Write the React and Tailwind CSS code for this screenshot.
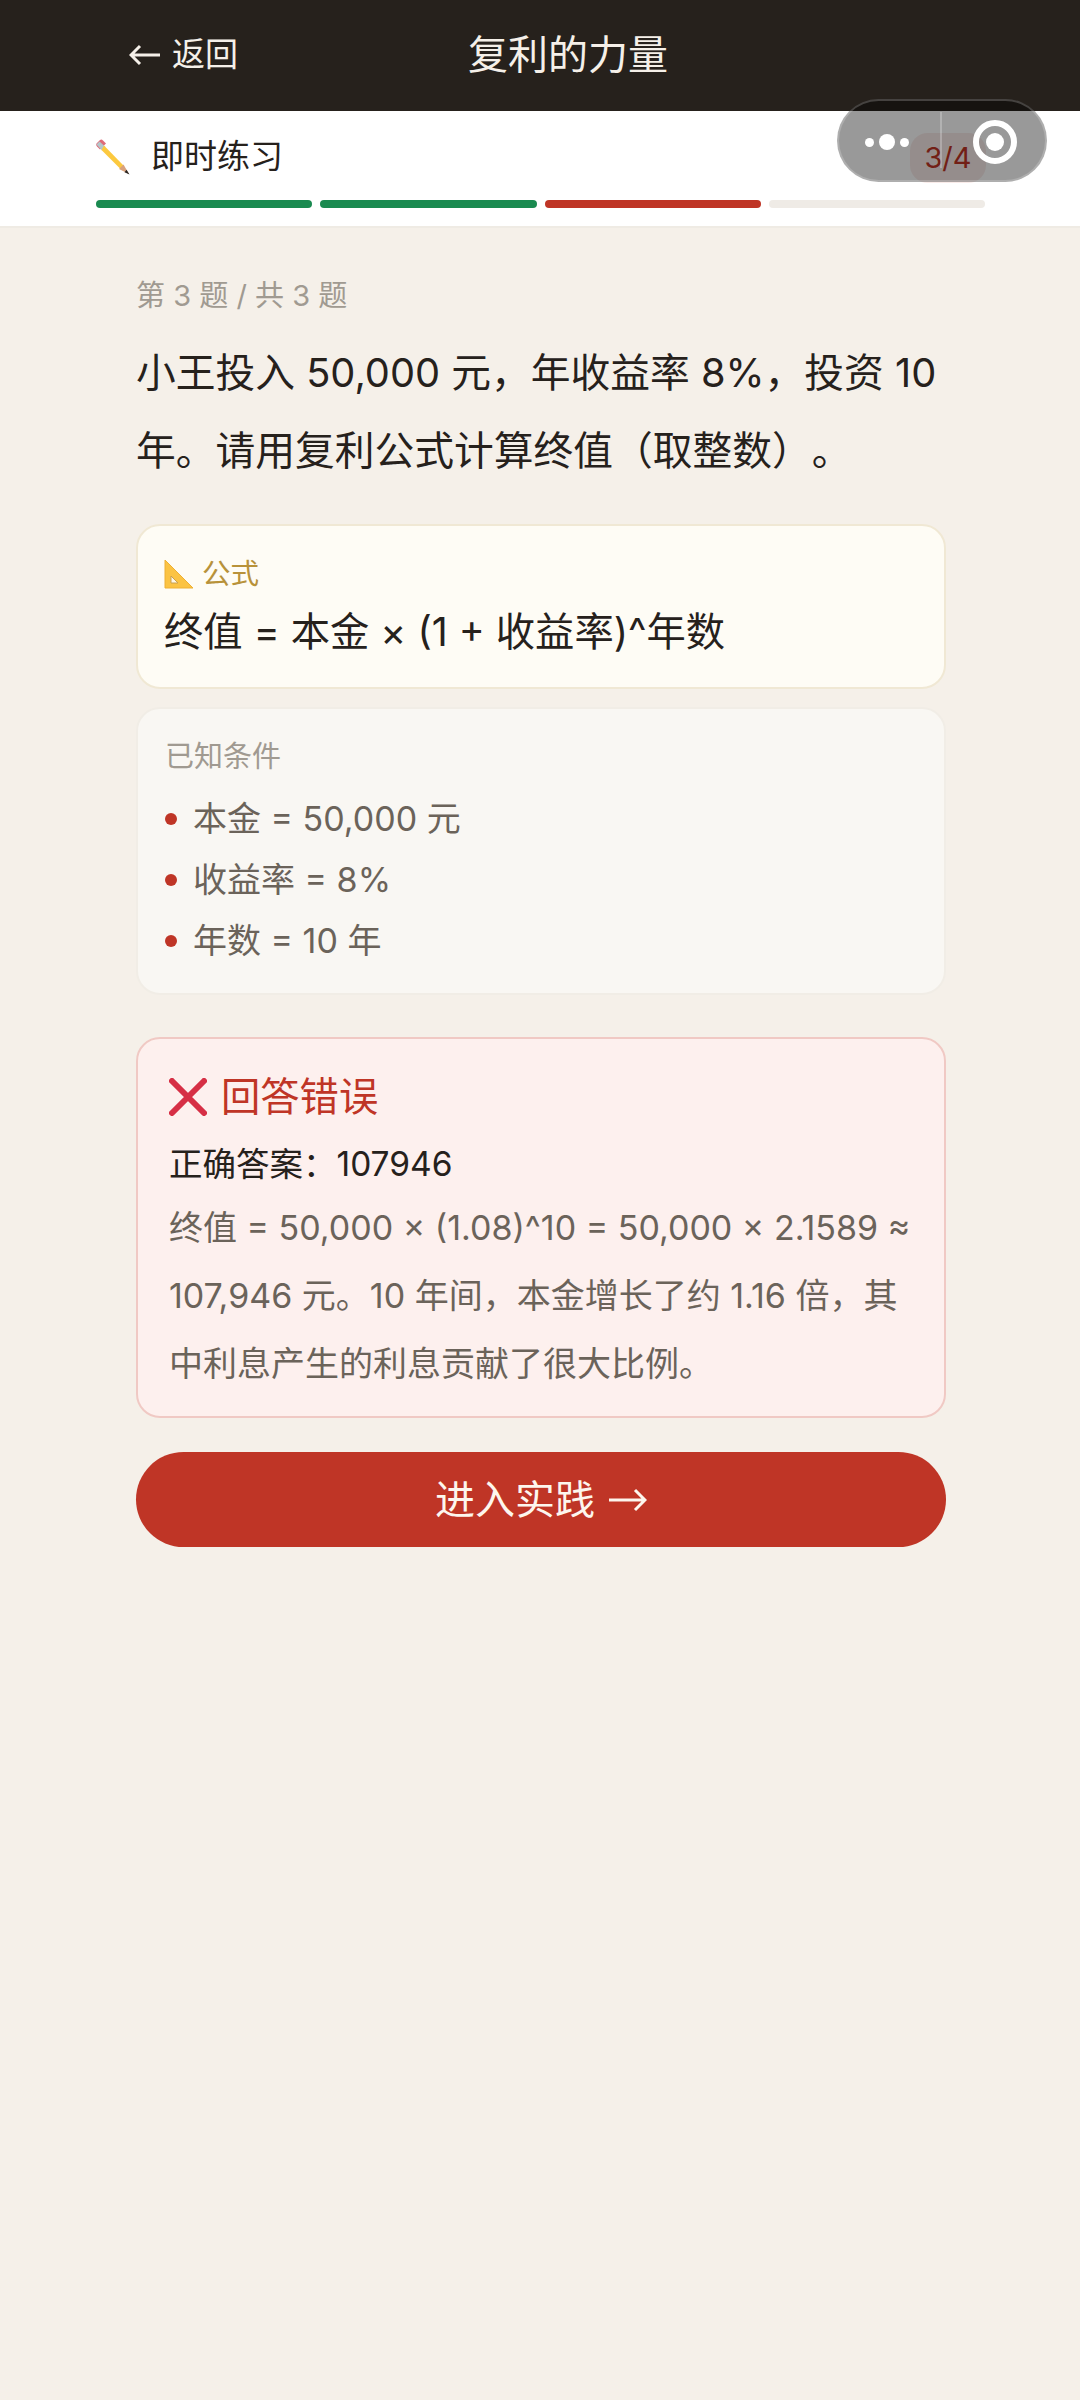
const FONT = 'font-["Inter","Noto_Sans_CJK_SC",sans-serif] [text-spacing-trim:space-all]'

const BARS = ['bg-[#1a8a50]', 'bg-[#1a8a50]', 'bg-[#bf3526]', 'bg-[#efebe6]']

const FACTS = ['本金 = 50,000 元', '收益率 = 8%', '年数 = 10 年']

function Pencil() {
  return (
    <svg width="36" height="36" viewBox="0 0 36 36" className="shrink-0">
      <path d="M1.5 4.5 L5 1 Q6.5 0 8 1.5 L11 4.5 L5 10.5 L2 7.5 Q0.5 6 1.5 4.5Z" fill="#de6b78" />
      <path d="M4.5 2.5 L10.5 8 L7 11.5 L1.5 5.5Z" fill="#b4c6ca" />
      <path d="M9 6.5 L28 26 L32 33 L26 30.5 L6.5 11Z" fill="#fcc93f" />
      <path d="M28.5 25.5 L34 35 L24 30Z" fill="#d9a27e" />
      <path d="M31.5 30.8 L34.5 35.5 L29.5 33.2Z" fill="#2a2522" />
    </svg>
  )
}

function Ruler() {
  return (
    <svg width="30" height="30" viewBox="0 0 30 30" className="shrink-0">
      <path d="M1 1 L29 29 L1 29Z" fill="#fbc343" stroke="#eeb035" strokeWidth="1" strokeLinejoin="round" />
      <path d="M7 17 L7 24 L14 24Z" fill="#fef7e6" stroke="#c9a050" strokeWidth="1" />
    </svg>
  )
}

export default function App() {
  return (
    <div className={`relative min-h-[2400px] bg-[#f5f0e9] ${FONT}`}>
      <div className="flex h-[111px] items-center bg-[#26211c] pb-[1px] text-[#f5f0e9]">
        <div className="flex w-[468px] items-center pl-[129px] text-[33px]">
          <svg width="32" height="24" viewBox="0 0 32 24" fill="none" stroke="currentColor" strokeWidth="3" className="mr-[11px]">
            <path d="M31 12 H2 M11 3 L2 12 L11 21" />
          </svg>
          <span>返回</span>
        </div>
        <span className="text-[40px]">复利的力量</span>
      </div>

      <div className="h-[117px] border-b-2 border-[#efebe4] bg-white pl-[96px] pr-[95px]">
        <div className="flex h-[89px] items-center justify-between">
          <div className="-ml-[1px] flex items-center gap-[20px] pt-[3px]">
            <Pencil />
            <span className="text-[33px] text-[#26211c]">即时练习</span>
          </div>
          <span className="mr-[-1px] mt-[4px] flex h-[50px] w-[76px] items-center justify-center rounded-[18px] bg-[#c0392b]/10 text-[29px] text-[#bf3526]">3/4</span>
        </div>
        <div className="flex gap-[8px]">
          {BARS.map((c, i) => (
            <div key={i} className={`h-[8px] flex-1 rounded-full ${c}`} />
          ))}
        </div>
      </div>

      <div className="pl-[136px] pr-[134px] pt-[48px]">
        <p className="text-[29px] leading-[40px] text-[#a09a91]">第 3 题 / 共 3 题</p>
        <p className="mt-[18px] text-[39.75px] leading-[78px] text-[#26211c]">
          小王投入 50,000 元，年收益率 8%，投资 10 年。请用复利公式计算终值（取整数）。
        </p>

        <div className="mt-[34px] h-[165px] rounded-[24px] border-2 border-[#f0e8d4] bg-[#fefcf5] px-[26px] pt-[28px]">
          <div className="flex items-center gap-[8px] text-[28.5px] leading-[40px] text-[#b8923a]">
            <Ruler />
            <span>公式</span>
          </div>
          <p className="mt-[10px] text-[39.3px] leading-[56px] text-[#26211c]">终值 = 本金 × (1 + 收益率)^年数</p>
        </div>

        <div className="mt-[18px] h-[288px] rounded-[24px] border-2 border-[#f1ede6] bg-[#f9f7f3] px-[27px] pt-[28px]">
          <p className="text-[29px] leading-[40px] text-[#a09a91]">已知条件</p>
          <div className="mt-[11px] flex flex-col">
            {FACTS.map((f) => (
              <div key={f} className="flex h-[61px] items-center gap-[16px] text-[34px] text-[#6b635a]">
                <span className="h-[12px] w-[12px] rounded-full bg-[#bf3526]" />
                <span>{f}</span>
              </div>
            ))}
          </div>
        </div>

        <div className="mt-[42px] h-[381px] rounded-[24px] border-2 border-[#f0c9c4] bg-[#fdf0ee] px-[31px] pt-[30px]">
          <div className="flex items-center gap-[14px] text-[39.3px] leading-[56px] text-[#bf3526]">
            <svg width="38" height="38" viewBox="0 0 38 38" fill="none" stroke="#d62f45" strokeWidth="6" strokeLinecap="round" className="shrink-0">
              <path d="M3 3 L35 35 M35 3 L3 35" />
            </svg>
            <span>回答错误</span>
          </div>
          <p className="mt-[14px] text-[33.5px] leading-[50px] text-[#26211c]">正确答案：107946</p>
          <p className="mt-[5px] text-[34px] leading-[68px] text-[#6b635a]">
            终值 = 50,000 × (1.08)^10 = 50,000 × 2.1589 ≈ 107,946 元。10 年间，本金增长了约 1.16 倍，其中利息产生的利息贡献了很大比例。
          </p>
        </div>

        <div className="mt-[34px] flex h-[95px] items-center justify-center gap-[14px] rounded-full bg-[#bf3526] text-[40px] text-[#fdf6ee]">
          <span>进入实践</span>
          <svg width="38" height="26" viewBox="0 0 38 26" fill="none" stroke="currentColor" strokeWidth="3">
            <path d="M0 13 H36 M26 3 L36 13 L26 23" />
          </svg>
        </div>
      </div>

      {/* capsule sitting over the page */}
      <div className="absolute left-[837px] top-[99px] flex h-[83px] w-[210px] items-center rounded-full border-2 border-white/20 bg-black/40 pl-[26px]">
        <div className="flex items-center gap-[5px] pt-[3px]">
          <span className="h-[9px] w-[9px] rounded-full bg-white" />
          <span className="h-[16px] w-[16px] rounded-full bg-white" />
          <span className="h-[9px] w-[9px] rounded-full bg-white" />
        </div>
        <div className="ml-[31px] mt-[11px] h-[56px] w-[2px] self-start bg-white/25" />
        <div className="ml-[31px] mt-[3px] flex h-[44px] w-[44px] items-center justify-center rounded-full border-[6px] border-white">
          <span className="h-[18px] w-[18px] rounded-full bg-white" />
        </div>
      </div>
    </div>
  )
}
